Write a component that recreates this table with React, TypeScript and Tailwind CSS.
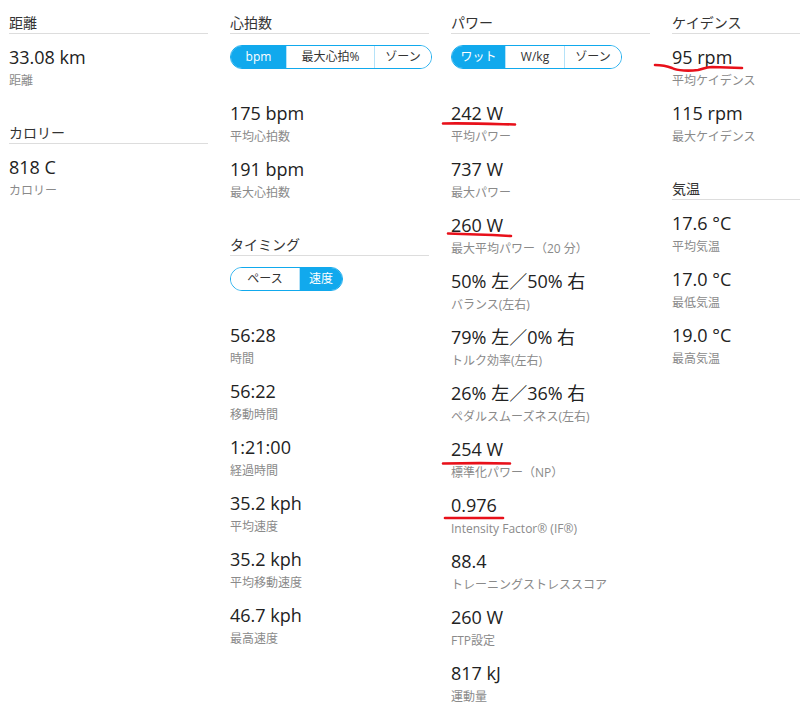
import React from 'react';

type Stat = { value: string; label: string };

type Section = {
  title: string;
  toggle?: { label: string; width: string; active?: boolean }[];
  stats: Stat[];
};

const columns: Section[][] = [
  [
    { title: '距離', stats: [{ value: '33.08 km', label: '距離' }] },
    { title: 'カロリー', stats: [{ value: '818 C', label: 'カロリー' }] },
  ],
  [
    {
      title: '心拍数',
      toggle: [
        { label: 'bpm', width: 'w-[55px]', active: true },
        { label: '最大心拍%', width: 'w-[88px]' },
        { label: 'ゾーン', width: 'w-[57px]' },
      ],
      stats: [
        { value: '175 bpm', label: '平均心拍数' },
        { value: '191 bpm', label: '最大心拍数' },
      ],
    },
    {
      title: 'タイミング',
      toggle: [
        { label: 'ペース', width: 'w-[68px]' },
        { label: '速度', width: 'w-[43px]', active: true },
      ],
      stats: [
        { value: '56:28', label: '時間' },
        { value: '56:22', label: '移動時間' },
        { value: '1:21:00', label: '経過時間' },
        { value: '35.2 kph', label: '平均速度' },
        { value: '35.2 kph', label: '平均移動速度' },
        { value: '46.7 kph', label: '最高速度' },
      ],
    },
  ],
  [
    {
      title: 'パワー',
      toggle: [
        { label: 'ワット', width: 'w-[53px]', active: true },
        { label: 'W/kg', width: 'w-[59px]' },
        { label: 'ゾーン', width: 'w-[57px]' },
      ],
      stats: [
        { value: '242 W', label: '平均パワー' },
        { value: '737 W', label: '最大パワー' },
        { value: '260 W', label: '最大平均パワー（20 分）' },
        { value: '50% 左／50% 右', label: 'バランス(左右)' },
        { value: '79% 左／0% 右', label: 'トルク効率(左右)' },
        { value: '26% 左／36% 右', label: 'ペダルスムーズネス(左右)' },
        { value: '254 W', label: '標準化パワー（NP）' },
        { value: '0.976', label: 'Intensity Factor® (IF®)' },
        { value: '88.4', label: 'トレーニングストレススコア' },
        { value: '260 W', label: 'FTP設定' },
        { value: '817 kJ', label: '運動量' },
      ],
    },
  ],
  [
    {
      title: 'ケイデンス',
      stats: [
        { value: '95 rpm', label: '平均ケイデンス' },
        { value: '115 rpm', label: '最大ケイデンス' },
      ],
    },
    {
      title: '気温',
      stats: [
        { value: '17.6 °C', label: '平均気温' },
        { value: '17.0 °C', label: '最低気温' },
        { value: '19.0 °C', label: '最高気温' },
      ],
    },
  ],
];

const StatBlock = ({ value, label }: Stat) => (
  <div className="flex flex-col">
    <div className="text-[18px] leading-6 text-[#222] whitespace-nowrap">{value}</div>
    <div className="mt-[4px] text-[12px] leading-4 text-[#8a8a8a] whitespace-nowrap">{label}</div>
  </div>
);

const SectionBlock = ({ title, toggle, stats }: Section) => (
  <div className="flex flex-col">
    {/* Header */}
    <div className="text-[14px] leading-5 text-[#333] border-b border-[#ddd]">{title}</div>

    {/* Unit toggle */}
    {toggle && (
      <div className="mt-[11px] flex self-start h-6 rounded-full border border-[#11a9ed] overflow-hidden">
        {toggle.map((t, i) => (
          <div
            key={i}
            className={`${t.width} flex items-center justify-center text-[12px] whitespace-nowrap ${
              t.active ? 'bg-[#11a9ed] text-white' : 'bg-white text-[#333]'
            } ${i > 0 ? 'border-l border-[#b5e2f8]' : ''}`}
          >
            {t.label}
          </div>
        ))}
      </div>
    )}

    {/* Stats */}
    <div className={`flex flex-col gap-[12px] ${toggle ? 'mt-8' : 'mt-[11px]'}`}>
      {stats.map((s, i) => (
        <StatBlock key={i} {...s} />
      ))}
    </div>
  </div>
);

export default function App() {
  return (
    <div
      className="relative min-h-screen w-[800px] bg-white overflow-hidden"
      style={{ fontFamily: '"Open Sans", "Noto Sans CJK JP", sans-serif' }}
    >
      <div className="flex gap-[22px] pl-[9px] pt-[13px]">
        {columns.map((col, ci) => (
          <div key={ci} className="w-[199px] shrink-0 flex flex-col gap-[34px]">
            {col.map((sec, si) => (
              <SectionBlock key={si} {...sec} />
            ))}
          </div>
        ))}
      </div>

      {/* hand-drawn red underlines */}
      <svg className="absolute inset-0 pointer-events-none" width="800" height="725">
        <g fill="none" stroke="#e8101a" strokeWidth="2.6" strokeLinecap="round" strokeLinejoin="round">
          <path d="M655 65 C662 65 667 66 672 68 C677 71 690 71 698 70 C703 69 705 67 712 67 L742 68" />
          <path d="M443 123.5 C470 123 495 124 515 124.5" />
          <path d="M448 233.5 C470 234 492 235 511 236" />
          <path d="M443 463.5 C470 463 492 463 510 463.5" />
          <path d="M445 518 C465 518 487 518 503 518" />
        </g>
      </svg>
    </div>
  );
}
